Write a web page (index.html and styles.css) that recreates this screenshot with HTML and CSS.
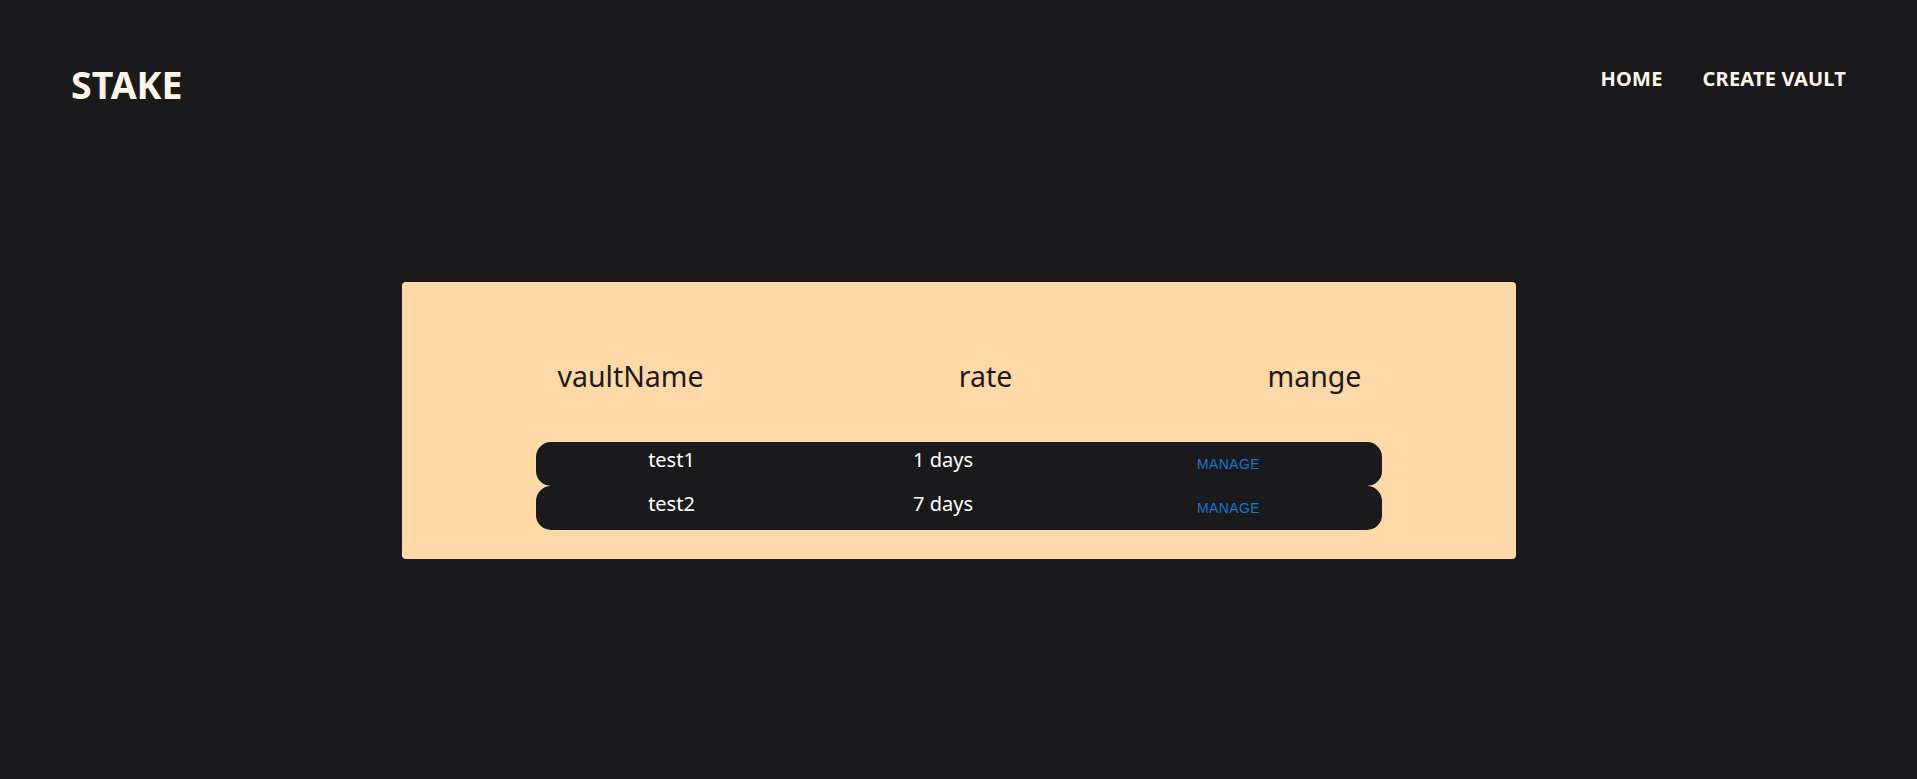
FILE: index.html
```html
<!DOCTYPE html>
<html lang="en">
<head>
<meta charset="utf-8">
<title>STAKE</title>
<link rel="stylesheet" href="styles.css">
</head>
<body>
<header class="topbar">
  <div class="logo">STAKE</div>
  <nav class="nav">
    <a class="nav-link" href="#">HOME</a>
    <a class="nav-link" href="#">CREATE VAULT</a>
  </nav>
</header>
<main class="main">
  <section class="card">
    <div class="thead">
      <div class="th th-name">vaultName</div>
      <div class="th th-rate">rate</div>
      <div class="th th-manage">mange</div>
    </div>
    <div class="rows">
      <div class="row">
        <div class="cell cell-name">test1</div>
        <div class="cell cell-rate">1 days</div>
        <div class="cell-action"><button class="btn">MANAGE</button></div>
      </div>
      <div class="row">
        <div class="cell cell-name">test2</div>
        <div class="cell cell-rate">7 days</div>
        <div class="cell-action"><button class="btn">MANAGE</button></div>
      </div>
    </div>
  </section>
</main>
</body>
</html>
```
FILE: styles.css
```css
html, body {
  margin: 0;
  padding: 0;
}
body {
  background: #1a1a1c;
  font-family: "Noto Sans", "Open Sans", sans-serif;
  min-height: 779px;
}
.topbar {
  display: flex;
  justify-content: space-between;
  align-items: flex-start;
  padding: 63px 71px 0 71px;
}
.logo {
  font-size: 37.5px;
  line-height: 43px;
  font-weight: 700;
  color: #fff4e6;
}
.nav {
  display: flex;
  gap: 40px;
  margin-top: 4px;
}
.nav-link {
  font-size: 20px;
  line-height: 24px;
  font-weight: 700;
  color: #fff4e6;
  text-decoration: none;
  letter-spacing: 0.2px;
}
.main {
  display: flex;
  justify-content: center;
  margin-top: 176px;
}
.card {
  width: 1114px;
  box-sizing: border-box;
  background: #ffd8a8;
  border-radius: 4px;
  padding: 76px 0 29px 0;
}
.thead {
  display: flex;
  height: 36px;
}
.th {
  width: 200px;
  text-align: center;
  font-size: 28.5px;
  line-height: 36px;
  color: #1a1a1c;
}
.th-name { margin-left: 129px; }
.th-rate { margin-left: 155px; }
.th-manage { margin-left: 129px; }
.rows {
  margin: 48px auto 0 auto;
  width: 846px;
}
.row {
  display: flex;
  height: 44px;
  background: #1a1a1c;
  border-radius: 15px;
}
.cell {
  width: 200px;
  text-align: center;
  font-size: 20px;
  line-height: 26px;
  padding-top: 5px;
  color: #ffffff;
}
.cell-name { margin-left: 36px; }
.cell-rate { margin-left: 71.5px; }
.cell-action {
  width: 200px;
  margin-left: 85.5px;
  display: flex;
  justify-content: center;
  align-items: center;
}
.btn {
  background: transparent;
  border: 0;
  padding: 6px 8px;
  font-family: "Liberation Sans", Arial, sans-serif;
  font-size: 14px;
  line-height: 24.5px;
  letter-spacing: 0.02857em;
  color: #1976d2;
  cursor: pointer;
}
```
